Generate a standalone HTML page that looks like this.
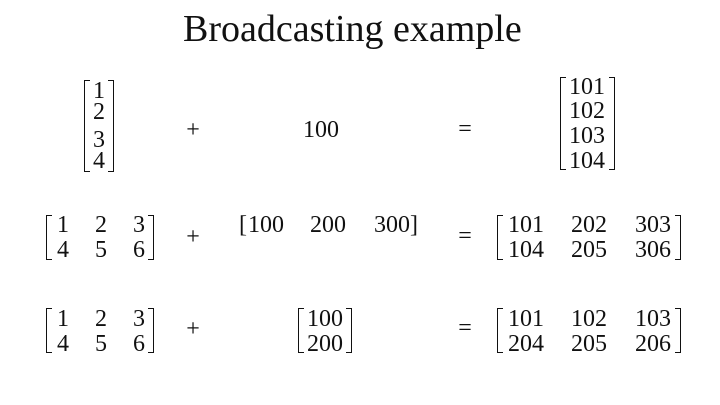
<html><head><style>
body{margin:0;width:720px;height:405px;background:#fff;position:relative;overflow:hidden;font-family:"Liberation Serif","DejaVu Serif",serif;color:#111}
.n{position:absolute;width:60px;margin-left:-30px;text-align:center;font-size:24px;line-height:1;white-space:nowrap}
.lb,.rb{position:absolute;border:1.6px solid #111;width:6px;box-sizing:border-box}
.lb{border-right:none}.rb{border-left:none}
</style></head><body>
<div style="position:absolute;left:183px;top:10px;font-size:38px;line-height:1;white-space:nowrap">Broadcasting example</div>

<!-- row 1 -->
<div class="lb" style="left:84px;top:80px;height:92px"></div>
<div class="n" style="left:99px;top:79px">1</div>
<div class="n" style="left:99px;top:100px">2</div>
<div class="n" style="left:99px;top:128px">3</div>
<div class="n" style="left:99px;top:149px">4</div>
<div class="rb" style="left:108px;top:80px;height:92px"></div>
<div class="n" style="left:193px;top:118px">+</div>
<div class="n" style="left:321px;top:118px">100</div>
<div class="n" style="left:465px;top:117px">=</div>
<div class="lb" style="left:560px;top:77px;height:93px"></div>
<div class="n" style="left:587px;top:75px">101</div>
<div class="n" style="left:587px;top:99px">102</div>
<div class="n" style="left:587px;top:124px">103</div>
<div class="n" style="left:587px;top:149px">104</div>
<div class="rb" style="left:609px;top:77px;height:93px"></div>

<!-- row 2 -->
<div class="lb" style="left:46px;top:215px;height:45px"></div>
<div class="n" style="left:63px;top:213px">1</div><div class="n" style="left:101px;top:213px">2</div><div class="n" style="left:139px;top:213px">3</div>
<div class="n" style="left:63px;top:238px">4</div><div class="n" style="left:101px;top:238px">5</div><div class="n" style="left:139px;top:238px">6</div>
<div class="rb" style="left:148px;top:215px;height:45px"></div>
<div class="n" style="left:193px;top:225px">+</div>
<div class="n" style="left:243px;top:213px">[</div>
<div class="n" style="left:266px;top:213px">100</div>
<div class="n" style="left:328px;top:213px">200</div>
<div class="n" style="left:392px;top:213px">300</div>
<div class="n" style="left:414px;top:213px">]</div>
<div class="n" style="left:465px;top:224px">=</div>
<div class="lb" style="left:497px;top:215px;height:45px"></div>
<div class="n" style="left:526px;top:213px">101</div><div class="n" style="left:589px;top:213px">202</div><div class="n" style="left:653px;top:213px">303</div>
<div class="n" style="left:526px;top:238px">104</div><div class="n" style="left:589px;top:238px">205</div><div class="n" style="left:653px;top:238px">306</div>
<div class="rb" style="left:675px;top:215px;height:45px"></div>

<!-- row 3 -->
<div class="lb" style="left:46px;top:308px;height:45px"></div>
<div class="n" style="left:63px;top:307px">1</div><div class="n" style="left:101px;top:307px">2</div><div class="n" style="left:139px;top:307px">3</div>
<div class="n" style="left:63px;top:332px">4</div><div class="n" style="left:101px;top:332px">5</div><div class="n" style="left:139px;top:332px">6</div>
<div class="rb" style="left:148px;top:308px;height:45px"></div>
<div class="n" style="left:193px;top:317px">+</div>
<div class="lb" style="left:298px;top:308px;height:45px"></div>
<div class="n" style="left:325px;top:307px">100</div>
<div class="n" style="left:325px;top:332px">200</div>
<div class="rb" style="left:346px;top:308px;height:45px"></div>
<div class="n" style="left:465px;top:316px">=</div>
<div class="lb" style="left:497px;top:308px;height:45px"></div>
<div class="n" style="left:526px;top:307px">101</div><div class="n" style="left:589px;top:307px">102</div><div class="n" style="left:653px;top:307px">103</div>
<div class="n" style="left:526px;top:332px">204</div><div class="n" style="left:589px;top:332px">205</div><div class="n" style="left:653px;top:332px">206</div>
<div class="rb" style="left:675px;top:308px;height:45px"></div>
</body></html>
